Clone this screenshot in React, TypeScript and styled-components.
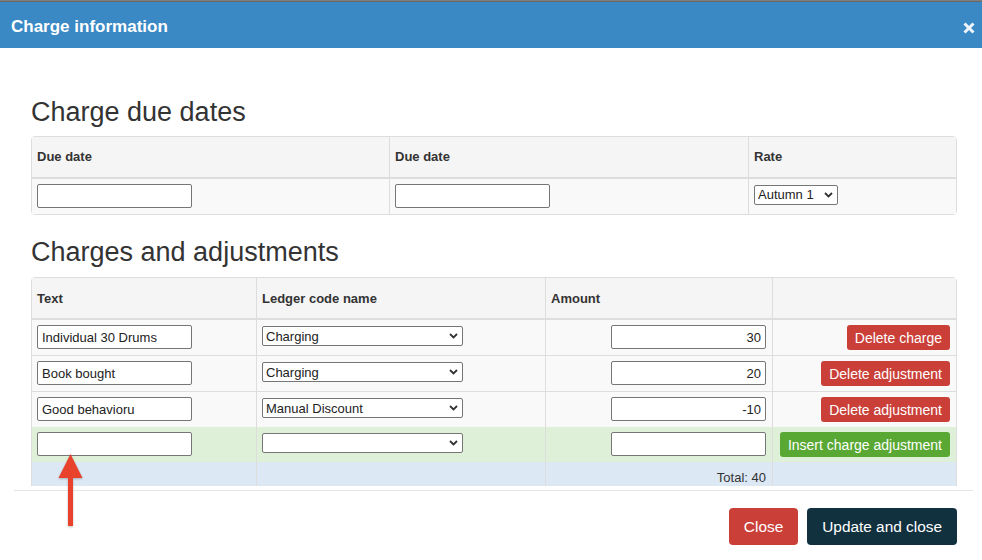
import React from "react";
import styled, { createGlobalStyle } from "styled-components";

const GlobalStyle = createGlobalStyle`
  html, body {
    margin: 0;
    padding: 0;
    background: #fff;
  }
  body {
    font-family: "Liberation Sans", Arial, sans-serif;
    color: #333;
  }
`;

const colors = {
  header: "#3a89c5",
  border: "#ddd",
  headRow: "#f5f5f5",
  stripe: "#f9f9f9",
  success: "#dff0d8",
  info: "#dce9f5",
  danger: "#ca4039",
  green: "#59a834",
  navy: "#12313f",
};

const Page = styled.div`
  position: relative;
  width: 982px;
  height: 560px;
  overflow: hidden;
`;

const Backdrop = styled.div`
  height: 2px;
  background: linear-gradient(to bottom, #8a8a8a, #5e5e5e);
`;

const Dialog = styled.div`
  display: flex;
  flex-direction: column;
  background: #fff;
`;

const TitleBar = styled.div`
  display: flex;
  align-items: center;
  justify-content: space-between;
  height: 46px;
  padding: 0 6px 0 11px;
  background: ${colors.header};
`;

const Title = styled.h1`
  margin: 3px 0 0;
  font-size: 17px;
  font-weight: bold;
  color: #fff;
`;

const CloseIcon = styled.button`
  display: flex;
  align-items: center;
  justify-content: center;
  width: 14px;
  height: 14px;
  margin-top: 5px;
  padding: 0;
  border: 0;
  background: none;
`;

const Body = styled.div`
  height: 438px;
  overflow: hidden;
  padding: 0 25px 0 31px;
`;

const Heading = styled.h2<{ $first?: boolean }>`
  margin: ${(p) => (p.$first ? "50px 0 8px" : "23px 0 10px")};
  font-size: 27px;
  line-height: 1.1;
  font-weight: normal;
  color: #333;
`;

const Table = styled.table`
  width: 100%;
  table-layout: fixed;
  border-collapse: separate;
  border-spacing: 0;
  border: 1px solid ${colors.border};
  border-radius: 4px;
  font-size: 13px;
`;

const Th = styled.th`
  height: 42px;
  padding: 0 5px;
  text-align: left;
  font-weight: bold;
  background: ${colors.headRow};
  border-bottom: 2px solid ${colors.border};
  border-left: 1px solid ${colors.border};
  box-sizing: border-box;
  &:first-child {
    border-left: 0;
  }
`;

const Row = styled.tr<{ $tone?: "stripe" | "success" | "info" }>`
  background: ${(p) =>
    p.$tone === "success" ? colors.success : p.$tone === "info" ? colors.info : colors.stripe};
  & + & > td {
    border-top: 1px solid ${colors.border};
  }
`;

const Td = styled.td<{ $right?: boolean }>`
  height: 25px;
  padding: 5px 6px 5px 5px;
  vertical-align: top;
  text-align: ${(p) => (p.$right ? "right" : "left")};
  border-left: 1px solid ${colors.border};
  &:first-child {
    border-left: 0;
  }
`;

const TextInput = styled.input<{ $right?: boolean }>`
  display: block;
  box-sizing: border-box;
  width: 155px;
  height: 24px;
  margin-left: ${(p) => (p.$right ? "auto" : "0")};
  padding: 0 4px;
  border: 1px solid #767676;
  border-radius: 2px;
  font: 13px "Liberation Sans", Arial, sans-serif;
  color: #222;
  text-align: ${(p) => (p.$right ? "right" : "left")};
`;

const SelectWrap = styled.div<{ $width: number }>`
  position: relative;
  width: ${(p) => p.$width}px;
  margin-top: 1px;
`;

const Select = styled.select`
  display: block;
  box-sizing: border-box;
  width: 100%;
  height: 20px;
  padding: 0 18px 0 3px;
  border: 1px solid #767676;
  border-radius: 2px;
  background: #fff;
  appearance: none;
  font: 13px "Liberation Sans", Arial, sans-serif;
  color: #222;
`;

const Chevron = styled.svg`
  position: absolute;
  right: 5px;
  top: 7px;
  pointer-events: none;
`;

const ActionButton = styled.button<{ $variant: "danger" | "success" }>`
  display: block;
  margin-left: auto;
  height: 25px;
  padding: 0 8px;
  border: 0;
  border-radius: 3px;
  background: ${(p) => (p.$variant === "danger" ? colors.danger : colors.green)};
  color: #fff;
  font: 14px "Liberation Sans", Arial, sans-serif;
`;

const Total = styled.div`
  padding-top: 3px;
  color: #333;
`;

const Footer = styled.div`
  display: flex;
  justify-content: flex-end;
  gap: 9px;
  margin: 4px 9px 0 14px;
  padding: 17px 16px 0 0;
  border-top: 1px solid #e5e5e5;
`;

const FooterButton = styled.button<{ $variant: "danger" | "primary" }>`
  height: 37px;
  padding: 0 15px;
  border: 0;
  border-radius: 4px;
  background: ${(p) => (p.$variant === "danger" ? colors.danger : colors.navy)};
  color: #fff;
  font: 15.4px "Liberation Sans", Arial, sans-serif;
`;

const Arrow = styled.svg`
  position: absolute;
  left: 56px;
  top: 450px;
  filter: drop-shadow(0 1px 1px rgba(0, 0, 0, 0.25));
`;

function Dropdown({ width, value }: { width: number; value?: string }) {
  return (
    <SelectWrap $width={width}>
      <Select defaultValue={value ?? ""}>
        <option value={value ?? ""}>{value ?? ""}</option>
      </Select>
      <Chevron width="9" height="6" viewBox="0 0 9 6">
        <polyline points="1,1 4.5,4.5 8,1" fill="none" stroke="#333" strokeWidth="1.8" />
      </Chevron>
    </SelectWrap>
  );
}

type Line = { text: string; ledger: string; amount: string; action: string };

const lines: Line[] = [
  { text: "Individual 30 Drums", ledger: "Charging", amount: "30", action: "Delete charge" },
  { text: "Book bought", ledger: "Charging", amount: "20", action: "Delete adjustment" },
  { text: "Good behavioru", ledger: "Manual Discount", amount: "-10", action: "Delete adjustment" },
];

export default function App() {
  return (
    <Page>
      <GlobalStyle />
      <Backdrop />
      <Dialog>
        <TitleBar>
          <Title>Charge information</Title>
          <CloseIcon aria-label="Close">
            <svg width="12" height="12" viewBox="0 0 12 12">
              <path d="M1.5 1.5 L10.5 10.5 M10.5 1.5 L1.5 10.5" stroke="#eef4fa" strokeWidth="3" />
            </svg>
          </CloseIcon>
        </TitleBar>

        <Body>
          <Heading $first>Charge due dates</Heading>
          <Table>
            <colgroup>
              <col style={{ width: 357 }} />
              <col style={{ width: 359 }} />
              <col />
            </colgroup>
            <thead>
              <tr>
                <Th>Due date</Th>
                <Th>Due date</Th>
                <Th>Rate</Th>
              </tr>
            </thead>
            <tbody>
              <Row>
                <Td>
                  <TextInput defaultValue="" />
                </Td>
                <Td>
                  <TextInput defaultValue="" />
                </Td>
                <Td>
                  <Dropdown width={84} value="Autumn 1" />
                </Td>
              </Row>
            </tbody>
          </Table>

          <Heading>Charges and adjustments</Heading>
          <Table>
            <colgroup>
              <col style={{ width: 224 }} />
              <col style={{ width: 289 }} />
              <col style={{ width: 227 }} />
              <col />
            </colgroup>
            <thead>
              <tr>
                <Th>Text</Th>
                <Th>Ledger code name</Th>
                <Th>Amount</Th>
                <Th />
              </tr>
            </thead>
            <tbody>
              {lines.map((line, key) => (
                <Row key={key}>
                  <Td>
                    <TextInput defaultValue={line.text} />
                  </Td>
                  <Td>
                    <Dropdown width={201} value={line.ledger} />
                  </Td>
                  <Td>
                    <TextInput $right defaultValue={line.amount} />
                  </Td>
                  <Td>
                    <ActionButton $variant="danger">{line.action}</ActionButton>
                  </Td>
                </Row>
              ))}
              <Row $tone="success">
                <Td>
                  <TextInput defaultValue="" />
                </Td>
                <Td>
                  <Dropdown width={201} />
                </Td>
                <Td>
                  <TextInput $right defaultValue="" />
                </Td>
                <Td>
                  <ActionButton $variant="success">Insert charge adjustment</ActionButton>
                </Td>
              </Row>
              <Row $tone="info">
                <Td />
                <Td />
                <Td $right>
                  <Total>Total: 40</Total>
                </Td>
                <Td />
              </Row>
            </tbody>
          </Table>
        </Body>

        <Footer>
          <FooterButton $variant="danger">Close</FooterButton>
          <FooterButton $variant="primary">Update and close</FooterButton>
        </Footer>
      </Dialog>

      <Arrow width="30" height="80" viewBox="0 0 30 80">
        <polygon points="14.5,4 2.5,28 26.5,28" fill="#e8412c" />
        <rect x="12" y="26" width="5" height="50" fill="#e8412c" />
      </Arrow>
    </Page>
  );
}
